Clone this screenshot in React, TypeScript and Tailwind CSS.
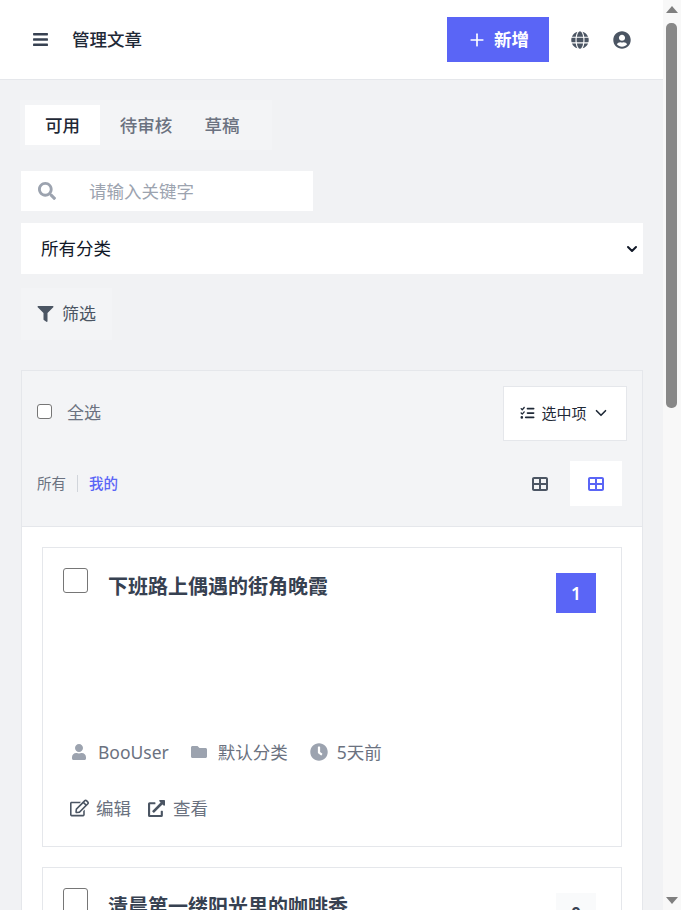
import React from 'react';
import { ChevronDown, Plus } from 'lucide-react';
import {
  FaBars,
  FaClock,
  FaExternalLinkAlt,
  FaFilter,
  FaFolder,
  FaGlobe,
  FaRegEdit,
  FaSearch,
  FaUser,
  FaUserCircle,
} from 'react-icons/fa';
import { FaListCheck, FaTableCellsLarge } from 'react-icons/fa6';

const fontStack = { fontFamily: '"Noto Sans", "Noto Sans CJK SC", sans-serif' };

const Tabs = () => (
  <div className="flex w-[252px] h-[50px] p-[5px] bg-[#f3f4f6] text-[17.5px] font-medium">
    <div className="w-[75px] flex items-center justify-center bg-white text-[#1f2937]">可用</div>
    <div className="w-[92px] flex items-center justify-center text-[#6b7280]">待审核</div>
    <div className="w-[70px] pr-[10px] flex items-center justify-center text-[#6b7280]">草稿</div>
  </div>
);

const ArticleCard = ({ title, count, active }: { title: string; count: number; active?: boolean }) => (
  <div className="h-[300px] shrink-0 border border-[#e5e7eb] bg-white flex flex-col">
    <div className="flex items-start pl-5 pr-[25px] pt-5 h-[181px]">
      <div className="w-[25px] h-[25px] rounded-[3px] border border-[#767676] bg-white shrink-0" />
      <h3 className="ml-5 text-[20px] leading-[30px] font-semibold text-[#374151] flex-1 pt-[4px]">{title}</h3>
      <div
        className={`mt-[5px] w-10 h-10 flex items-center justify-center text-[17.5px] font-semibold ${
          active ? 'bg-[#5a65f6] text-white' : 'bg-[#f9fafb] text-[#374151]'
        }`}
      >
        {count}
      </div>
    </div>
    <div className="flex items-center h-[26px] mt-[10px] pl-7 text-[17.5px] text-[#6b7280]">
      <FaUser className="text-[#9ca3af] w-[16px] h-[16px]" />
      <span className="ml-[11px]">BooUser</span>
      <FaFolder className="ml-[21px] text-[#9ca3af] w-[18px] h-[16px]" />
      <span className="ml-[10px]">默认分类</span>
      <FaClock className="ml-[22px] text-[#9ca3af] w-[18px] h-[18px]" />
      <span className="ml-[9px]">5天前</span>
    </div>
    <div className="flex items-center h-[26px] mt-[30px] pl-[27px] text-[17.5px] text-[#6b7280]">
      <FaRegEdit className="text-[#4b5563] w-[19px] h-[18px]" />
      <span className="ml-[7px]">编辑</span>
      <FaExternalLinkAlt className="ml-[17px] text-[#4b5563] w-[17px] h-[17px]" />
      <span className="ml-[8px]">查看</span>
    </div>
  </div>
);

const Scrollbar = () => (
  <div className="w-[18px] shrink-0 h-full bg-[#f8f8f8] flex flex-col items-center relative">
    <div className="mt-[6px] w-0 h-0 border-x-[6px] border-x-transparent border-b-[7px] border-b-[#7f7f7f]" />
    <div className="mt-[10px] w-[11px] h-[385px] ml-[-1px] rounded-b-[5px] rounded-t-[5px] bg-[#888888]" />
    <div className="mt-auto mb-[6px] w-0 h-0 border-x-[6px] border-x-transparent border-t-[7px] border-t-[#7f7f7f]" />
  </div>
);

export default function App() {
  return (
    <div className="flex h-[910px] w-[681px] overflow-hidden bg-[#f1f2f4]" style={fontStack}>
      <div className="w-[663px] shrink-0 h-full overflow-hidden">
        <header className="h-[80px] bg-white border-b border-[#e5e7eb] flex items-center pl-[32px] pr-[32px]">
          <FaBars className="w-[17px] h-[17px] text-[#374151]" />
          <h1 className="ml-[23px] text-[17.5px] font-medium text-[#1f2937]">管理文章</h1>
          <button className="ml-auto w-[102px] h-[45px] bg-[#5a65f6] text-white text-[17.5px] font-semibold flex items-center justify-center gap-[7px]">
            <Plus className="w-[20px] h-[20px]" />
            新增
          </button>
          <FaGlobe className="ml-[22px] w-[18px] h-[18px] text-[#4b5563]" />
          <FaUserCircle className="ml-[24px] w-[18px] h-[18px] text-[#4b5563]" />
        </header>

        <main className="pl-[21px] pr-[20px] pt-[20px]">
          <div className="ml-[-1px]">
            <Tabs />
          </div>

          <div className="mt-[21px] w-[292px] h-[40px] bg-white flex items-center pl-[17px]">
            <FaSearch className="w-[18px] h-[18px] text-[#9ca3af]" />
            <span className="ml-[33px] text-[17.5px] text-[#9ca3af]">请输入关键字</span>
          </div>

          <div className="mt-[12px] h-[51px] bg-white flex items-center pl-[20px] pr-[3px] text-[17.5px] text-[#111827]">
            所有分类
            <ChevronDown className="ml-auto w-[16px] h-[16px] text-[#111827]" strokeWidth={3} />
          </div>

          <button className="mt-[14px] w-[91px] h-[52px] bg-[#f3f4f6] flex items-center pl-[16px] text-[17px] text-[#4b5563]">
            <FaFilter className="w-[17px] h-[16px] text-[#4b5563]" />
            <span className="ml-[8px]">筛选</span>
          </button>

          <section className="mt-[30px] border border-[#e5e7eb]">
            <div className="bg-[#f3f4f6] h-[156px] border-b border-[#e5e7eb] px-[15px] flex flex-col">
              <div className="flex items-center h-[54px] mt-[15px]">
                <div className="w-[15px] h-[15px] rounded-[3px] border border-[#767676] bg-white -mt-[3px]" />
                <span className="ml-[15px] text-[17px] text-[#6b7280]">全选</span>
                <button className="ml-auto w-[124px] h-[55px] bg-white border border-[#e5e7eb] flex items-center justify-center text-[15px] text-[#1f2937]">
                  <FaListCheck className="w-[15px] h-[14px]" />
                  <span className="ml-[6px]">选中项</span>
                  <ChevronDown className="ml-[5px] w-[18px] h-[18px]" strokeWidth={2.2} />
                </button>
              </div>
              <div className="flex items-center h-[45px] mt-[21px] text-[14.5px]">
                <span className="text-[#6b7280]">所有</span>
                <span className="mx-[11px] w-px h-[17px] bg-[#d1d5db]" />
                <span className="font-medium text-[#5a65f6]">我的</span>
                <div className="ml-auto flex items-center mr-[5px]">
                  <FaTableCellsLarge className="w-[16px] h-[16px] text-[#4b5563] mr-[22px]" />
                  <div className="w-[52px] h-[45px] bg-white flex items-center justify-center">
                    <FaTableCellsLarge className="w-[16px] h-[16px] text-[#5a65f6]" />
                  </div>
                </div>
              </div>
            </div>
            <div className="bg-white p-5 flex flex-col gap-5">
              <ArticleCard title="下班路上偶遇的街角晚霞" count={1} active />
              <ArticleCard title="清晨第一缕阳光里的咖啡香" count={0} />
            </div>
          </section>
        </main>
      </div>
      <Scrollbar />
    </div>
  );
}
